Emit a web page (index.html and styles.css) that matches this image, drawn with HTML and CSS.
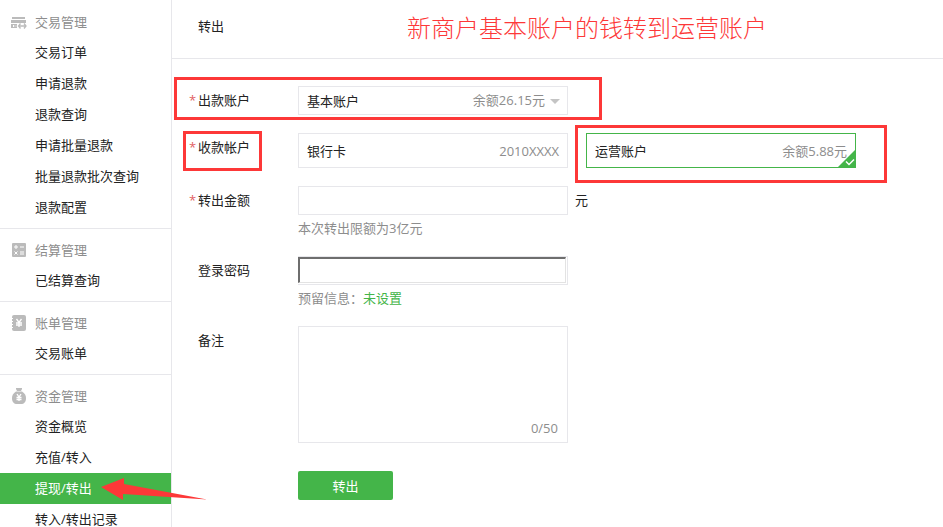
FILE: index.html
```
<!DOCTYPE html>
<html lang="zh-CN">
<head>
  <meta charset="UTF-8">
  <title>转出</title>
  <link rel="stylesheet" href="styles.css">
</head>
<body>

  <nav class="sidebar">
    <div class="menu-group">
      <h3>
        <svg class="menu-icon" width="16" height="16" viewBox="0 0 16 16">
          <path d="M1 3h13v2H1zM0 6h15v3H0zM0 10h6v1H2v2h4v1H0z" fill="#bbb"/>
          <path d="M3 12h3M9.500 9.500L7.500 12l2 2.500M13 9.500l2 2.500-2 2.500M7.500 12h7.500" fill="none" stroke="#bbb" stroke-width="1.300"/>
        </svg>
        交易管理
      </h3>
      <ul>
        <li><a href="#">交易订单</a></li>
        <li><a href="#">申请退款</a></li>
        <li><a href="#">退款查询</a></li>
        <li><a href="#">申请批量退款</a></li>
        <li><a href="#">批量退款批次查询</a></li>
        <li><a href="#">退款配置</a></li>
      </ul>
    </div>
    <div class="menu-group">
      <h3>
        <svg class="menu-icon" width="16" height="16" viewBox="0 0 16 16">
          <rect x="1" y="1" width="14" height="14" rx="1" fill="#bbb"/>
          <path d="M3 5h4M5 3v4M9 5h4M3.500 9.500l3 3M6.500 9.500l-3 3M9 10h4M9 12h4" stroke="#fff" fill="none"/>
        </svg>
        结算管理
      </h3>
      <ul>
        <li><a href="#">已结算查询</a></li>
      </ul>
    </div>
    <div class="menu-group">
      <h3>
        <svg class="menu-icon" width="16" height="16" viewBox="0 0 16 16">
          <rect x="1" y="0" width="14" height="16" rx="2" fill="#bbb"/>
          <path d="M0 3.500h2M0 6.500h2M0 9.500h2M0 12.500h2" stroke="#fff"/>
          <path d="M5.500 4l2.500 3.500L10.500 4M8 7.500V12M5 8h6M5 10h6" stroke="#fff" stroke-width="1.300" fill="none"/>
        </svg>
        账单管理
      </h3>
      <ul>
        <li><a href="#">交易账单</a></li>
      </ul>
    </div>
    <div class="menu-group">
      <h3>
        <svg class="menu-icon" width="16" height="16" viewBox="0 0 16 16">
          <path d="M5 0h6v1l-1 2H6L5 1z" fill="#bbb"/>
          <path d="M5 3.500h6c3 2 4 4 4 6.500 0 4-2 6-5 6H6c-3 0-5-2-5-6 0-2.500 1-4.500 4-6.500z" fill="#bbb"/>
          <path d="M6 6l2 3 2-3M8 9v4M5.500 9.500h5M5.500 11.500h5" stroke="#fff" stroke-width="1.300" fill="none"/>
        </svg>
        资金管理
      </h3>
      <ul>
        <li><a href="#">资金概览</a></li>
        <li><a href="#">充值/转入</a></li>
        <li class="active">
          <a href="#">提现/转出</a>
          <svg class="arrow" width="106" height="24" viewBox="0 0 106 24">
            <path d="M0 9L23 0V6L106 21.500L22 16V22z" fill="#fd3838"/>
          </svg>
        </li>
        <li><a href="#">转入/转出记录</a></li>
      </ul>
    </div>
  </nav>

  <main>
    <header>
      <h1>转出</h1>
      <p class="note-title">新商户基本账户的钱转到运营账户</p>
    </header>

    <form id="transferForm">
      <div class="row">
        <label class="name" for="fromAccount"><span class="star">*</span>出款账户</label>
        <div class="field select-box">
          <select id="fromAccount">
            <option>基本账户</option>
            <option>运营账户</option>
          </select>
          <span class="balance">余额26.15元</span>
        </div>
        <div class="mark mark-from"></div>
      </div>

      <div class="row">
        <span class="name" id="toAccount"><span class="star">*</span>收款帐户</span>
        <div class="accounts" role="radiogroup" aria-labelledby="toAccount">
          <label class="card">
            <input type="radio" name="to" value="bank">
            <span>银行卡</span>
            <span class="gray">2010XXXX</span>
          </label>
          <label class="card">
            <input type="radio" name="to" value="operate" checked>
            <span>运营账户</span>
            <span class="gray">余额5.88元</span>
            <svg class="tick" width="17" height="17" viewBox="0 0 17 17">
              <path d="M17 0v17H0z" fill="#44b549"/>
              <path d="M8 11.500l3 3 5-5" fill="none" stroke="#fff" stroke-width="1.500"/>
            </svg>
            <span class="mark mark-operate"></span>
          </label>
        </div>
        <div class="mark mark-to"></div>
      </div>

      <div class="row">
        <label class="name" for="amount"><span class="star">*</span>转出金额</label>
        <div class="field">
          <input type="text" id="amount">
          <p class="hint">本次转出限额为3亿元</p>
        </div>
        <span class="unit">元</span>
      </div>

      <div class="row">
        <label class="name" for="password">登录密码</label>
        <div class="field">
          <div class="password-box">
            <input type="password" id="password">
          </div>
          <p class="hint">预留信息：<a href="#">未设置</a></p>
        </div>
      </div>

      <div class="row">
        <label class="name" for="remark">备注</label>
        <div class="field">
          <textarea id="remark" maxlength="50"></textarea>
          <span class="count">0/50</span>
        </div>
      </div>

      <button type="submit">转出</button>
    </form>
  </main>

</body>
</html>
```

FILE: styles.css
```
* {
  box-sizing: border-box;
}

body {
  margin: 0;
  display: flex;
  min-height: 100vh;
  font-family: "Open Sans", "Noto Sans CJK SC", sans-serif;
  font-size: 13px;
  color: #222;
  background: #fff;
}

h1, h3, p, ul {
  margin: 0;
  padding: 0;
  font-size: 13px;
  font-weight: normal;
}

ul {
  list-style: none;
}

/* left menu */
.sidebar {
  flex: 0 0 172px;
  height: 100vh;
  padding-top: 1px;
  border-right: 1px solid #e7e7eb;
}

.menu-group {
  padding: 6px 0 5px;
  border-bottom: 1px solid #e7e7eb;
}

.menu-group:last-child {
  border-bottom: none;
}

.menu-group h3 {
  display: flex;
  align-items: center;
  gap: 8px;
  height: 30px;
  padding: 0 0 2px 11px;
  color: #8d8d8d;
}

.menu-icon {
  position: relative;
  top: 1px;
}

.menu-group li {
  position: relative;
}

.menu-group a {
  display: block;
  padding-left: 35px;
  line-height: 31px;
  color: #222;
  text-decoration: none;
}

.menu-group .active a {
  background-color: #44b549;
  color: #fff;
}

.arrow {
  position: absolute;
  left: 101px;
  top: 5px;
  z-index: 2;
}

/* content */
main {
  flex: 1;
  min-width: 0;
}

header {
  display: flex;
  align-items: center;
  height: 59px;
  padding: 0 26px 8px;
  border-bottom: 1px solid #e7e7eb;
}

.note-title {
  margin: 6px 0 0 183px;
  font-size: 24px;
  font-weight: 300;
  line-height: 32px;
  color: #fd3838;
}

form {
  padding: 27px 17px;
}

.row {
  position: relative;
  display: flex;
  align-items: flex-start;
  margin-bottom: 18px;
}

.name {
  flex: 0 0 109px;
  padding-left: 9px;
  line-height: 28px;
}

.star {
  display: inline-block;
  width: 9px;
  margin-left: -9px;
  color: #e15f63;
}

.field {
  position: relative;
  width: 270px;
}

input[type="text"], select, textarea, .password-box {
  display: block;
  width: 100%;
  height: 29px;
  padding: 0 8px;
  border: 1px solid #e7e7eb;
  border-radius: 0;
  background: #fff;
  font: inherit;
  color: #222;
}

select {
  appearance: none;
}

.select-box::after {
  content: "";
  position: absolute;
  right: 8px;
  top: 13px;
  border: 5px solid transparent;
  border-top-color: #c4c4c4;
  border-bottom: none;
}

.balance {
  position: absolute;
  right: 23px;
  top: 0;
  line-height: 29px;
  color: #8d8d8d;
  pointer-events: none;
}

.accounts {
  display: flex;
  gap: 18px;
}

.card {
  position: relative;
  display: flex;
  justify-content: space-between;
  align-items: center;
  width: 270px;
  height: 35px;
  padding: 0 8px;
  border: 1px solid #e7e7eb;
}

.card input {
  position: absolute;
  opacity: 0;
}

.card:has(input:checked) {
  border-color: #44b549;
}

.gray {
  color: #8d8d8d;
}

.tick {
  position: absolute;
  right: 0;
  bottom: 0;
}

.unit {
  margin-left: 7px;
  line-height: 28px;
}

.hint {
  margin-top: 3px;
  line-height: 20px;
  color: #8d8d8d;
}

.hint a {
  color: #44b549;
  text-decoration: none;
}

.password-box {
  padding: 0 1px 1px 0;
  border-left: none;
}

#password {
  display: block;
  width: 100%;
  height: 26px;
  padding: 0 8px;
  border: 2px solid #6e6e6e;
  border-right: 1px solid #e3e3e3;
  border-bottom: 1px solid #e3e3e3;
}

textarea {
  height: 117px;
  padding: 8px;
  resize: none;
}

.count {
  position: absolute;
  right: 10px;
  bottom: 5px;
  line-height: 20px;
  color: #8d8d8d;
}

button {
  display: block;
  width: 95px;
  height: 29px;
  margin: 28px 0 0 109px;
  padding: 0 0 1px;
  border: none;
  border-radius: 2px;
  background-color: #44b549;
  font: inherit;
  color: #fff;
  cursor: pointer;
}

/* red frames over the form */
.mark {
  position: absolute;
  border: 3px solid #fd3838;
  pointer-events: none;
}

.mark-from {
  left: -15px;
  top: -9px;
  width: 428px;
  height: 43px;
}

.mark-to {
  left: -6px;
  top: -2px;
  width: 79px;
  height: 40px;
}

.mark-operate {
  left: -12px;
  top: -9px;
  width: 312px;
  height: 58px;
}
```
